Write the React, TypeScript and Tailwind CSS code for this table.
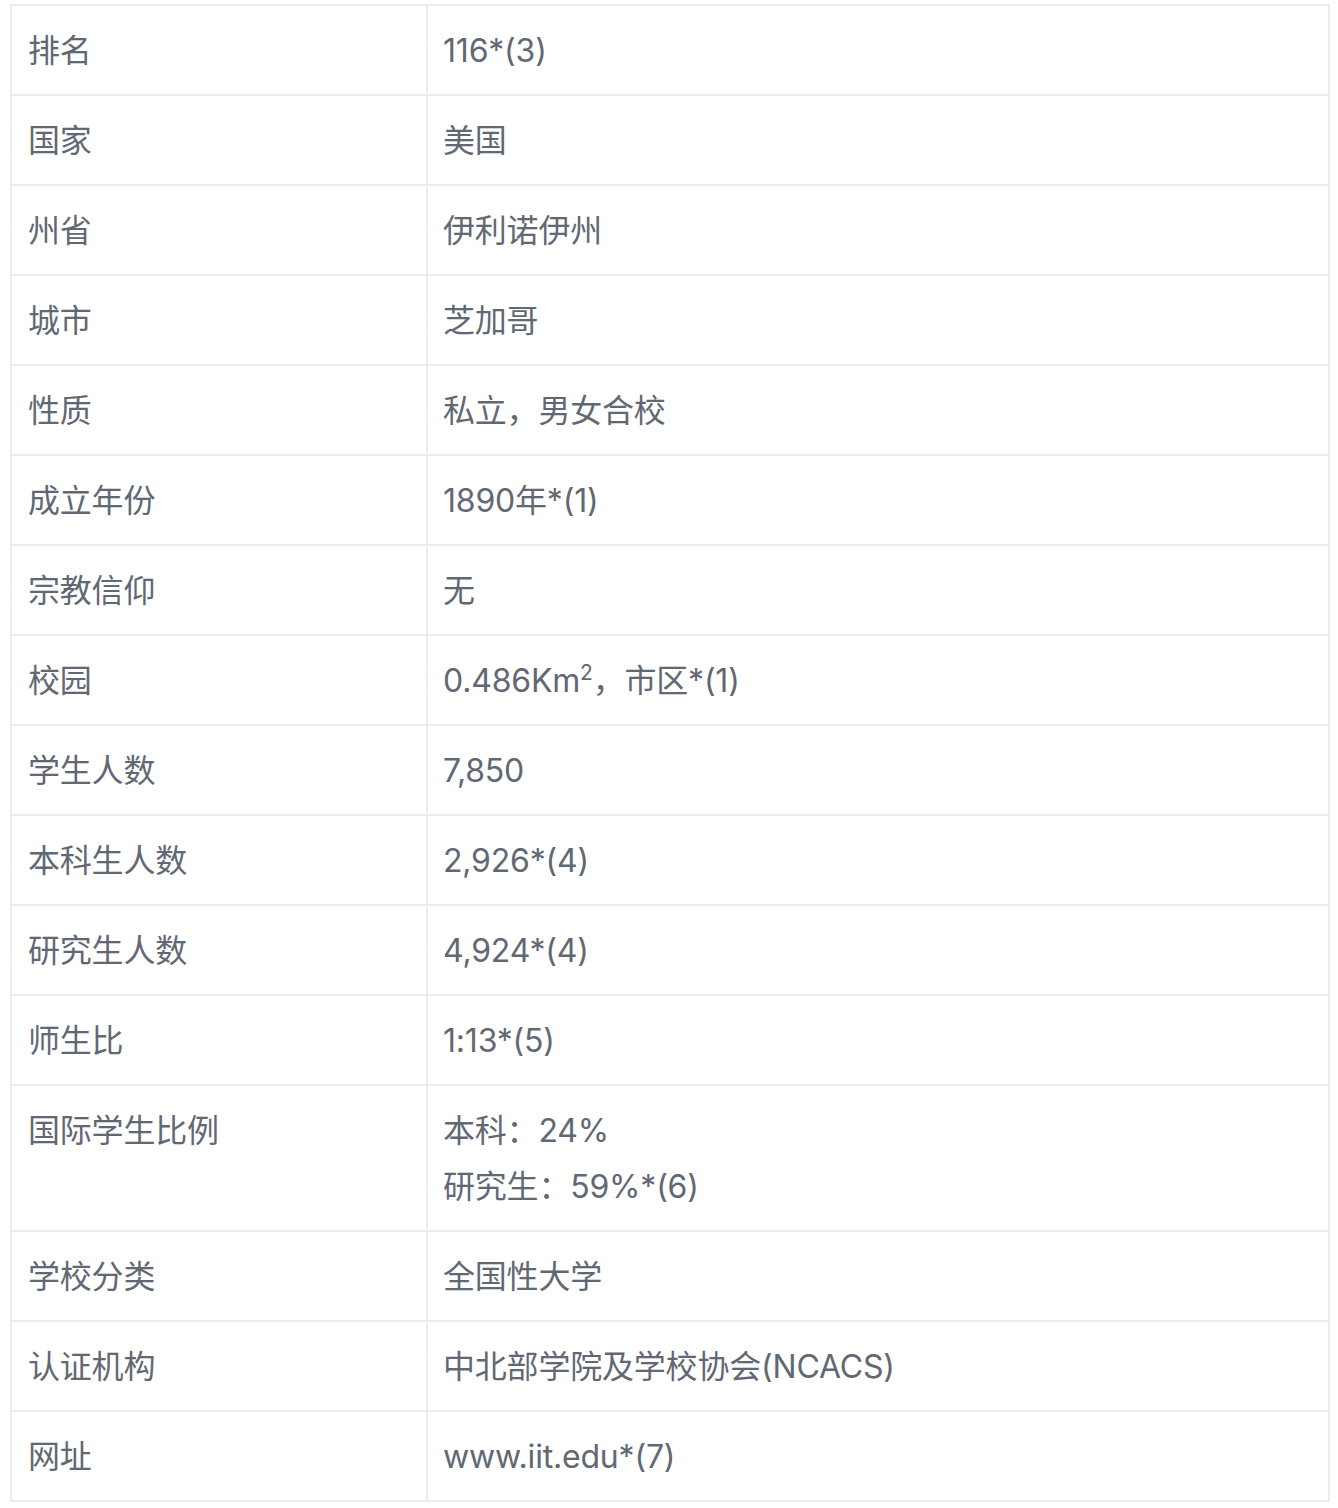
import React from "react";

const rows: { k: string; v: React.ReactNode }[] = [
  { k: "排名", v: "116*(3)" },
  { k: "国家", v: "美国" },
  { k: "州省", v: "伊利诺伊州" },
  { k: "城市", v: "芝加哥" },
  { k: "性质", v: "私立，男女合校" },
  { k: "成立年份", v: "1890年*(1)" },
  { k: "宗教信仰", v: "无" },
  {
    k: "校园",
    v: (
      <>
        0.486Km<span className="text-[21px] relative top-[-12px] leading-none">2</span>，市区*(1)
      </>
    ),
  },
  { k: "学生人数", v: "7,850" },
  { k: "本科生人数", v: "2,926*(4)" },
  { k: "研究生人数", v: "4,924*(4)" },
  { k: "师生比", v: "1:13*(5)" },
  {
    k: "国际学生比例",
    v: (
      <>
        <div>本科：24%</div>
        <div>研究生：59%*(6)</div>
      </>
    ),
  },
  { k: "学校分类", v: "全国性大学" },
  { k: "认证机构", v: "中北部学院及学校协会(NCACS)" },
  { k: "网址", v: "www.iit.edu*(7)" },
];

export default function App() {
  return (
    <div className="bg-white w-[1338px] h-[1508px] pt-[4px] pl-[10px]">
      <table
        className="w-[1320px] border-collapse text-[32px] leading-[56px] text-[#626873] tracking-[-0.2px]"
        style={{ fontFamily: '"Inter", "Noto Sans CJK SC", sans-serif' }}
      >
        <tbody>
          {rows.map((r) => (
            <tr key={r.k}>
              <td className="w-[416px] border-2 border-[#ececec] px-[16px] pt-[17px] pb-[15px] align-top">
                {r.k}
              </td>
              <td className="border-2 border-[#ececec] px-[15px] pt-[17px] pb-[15px] align-top">
                {r.v}
              </td>
            </tr>
          ))}
        </tbody>
      </table>
    </div>
  );
}
